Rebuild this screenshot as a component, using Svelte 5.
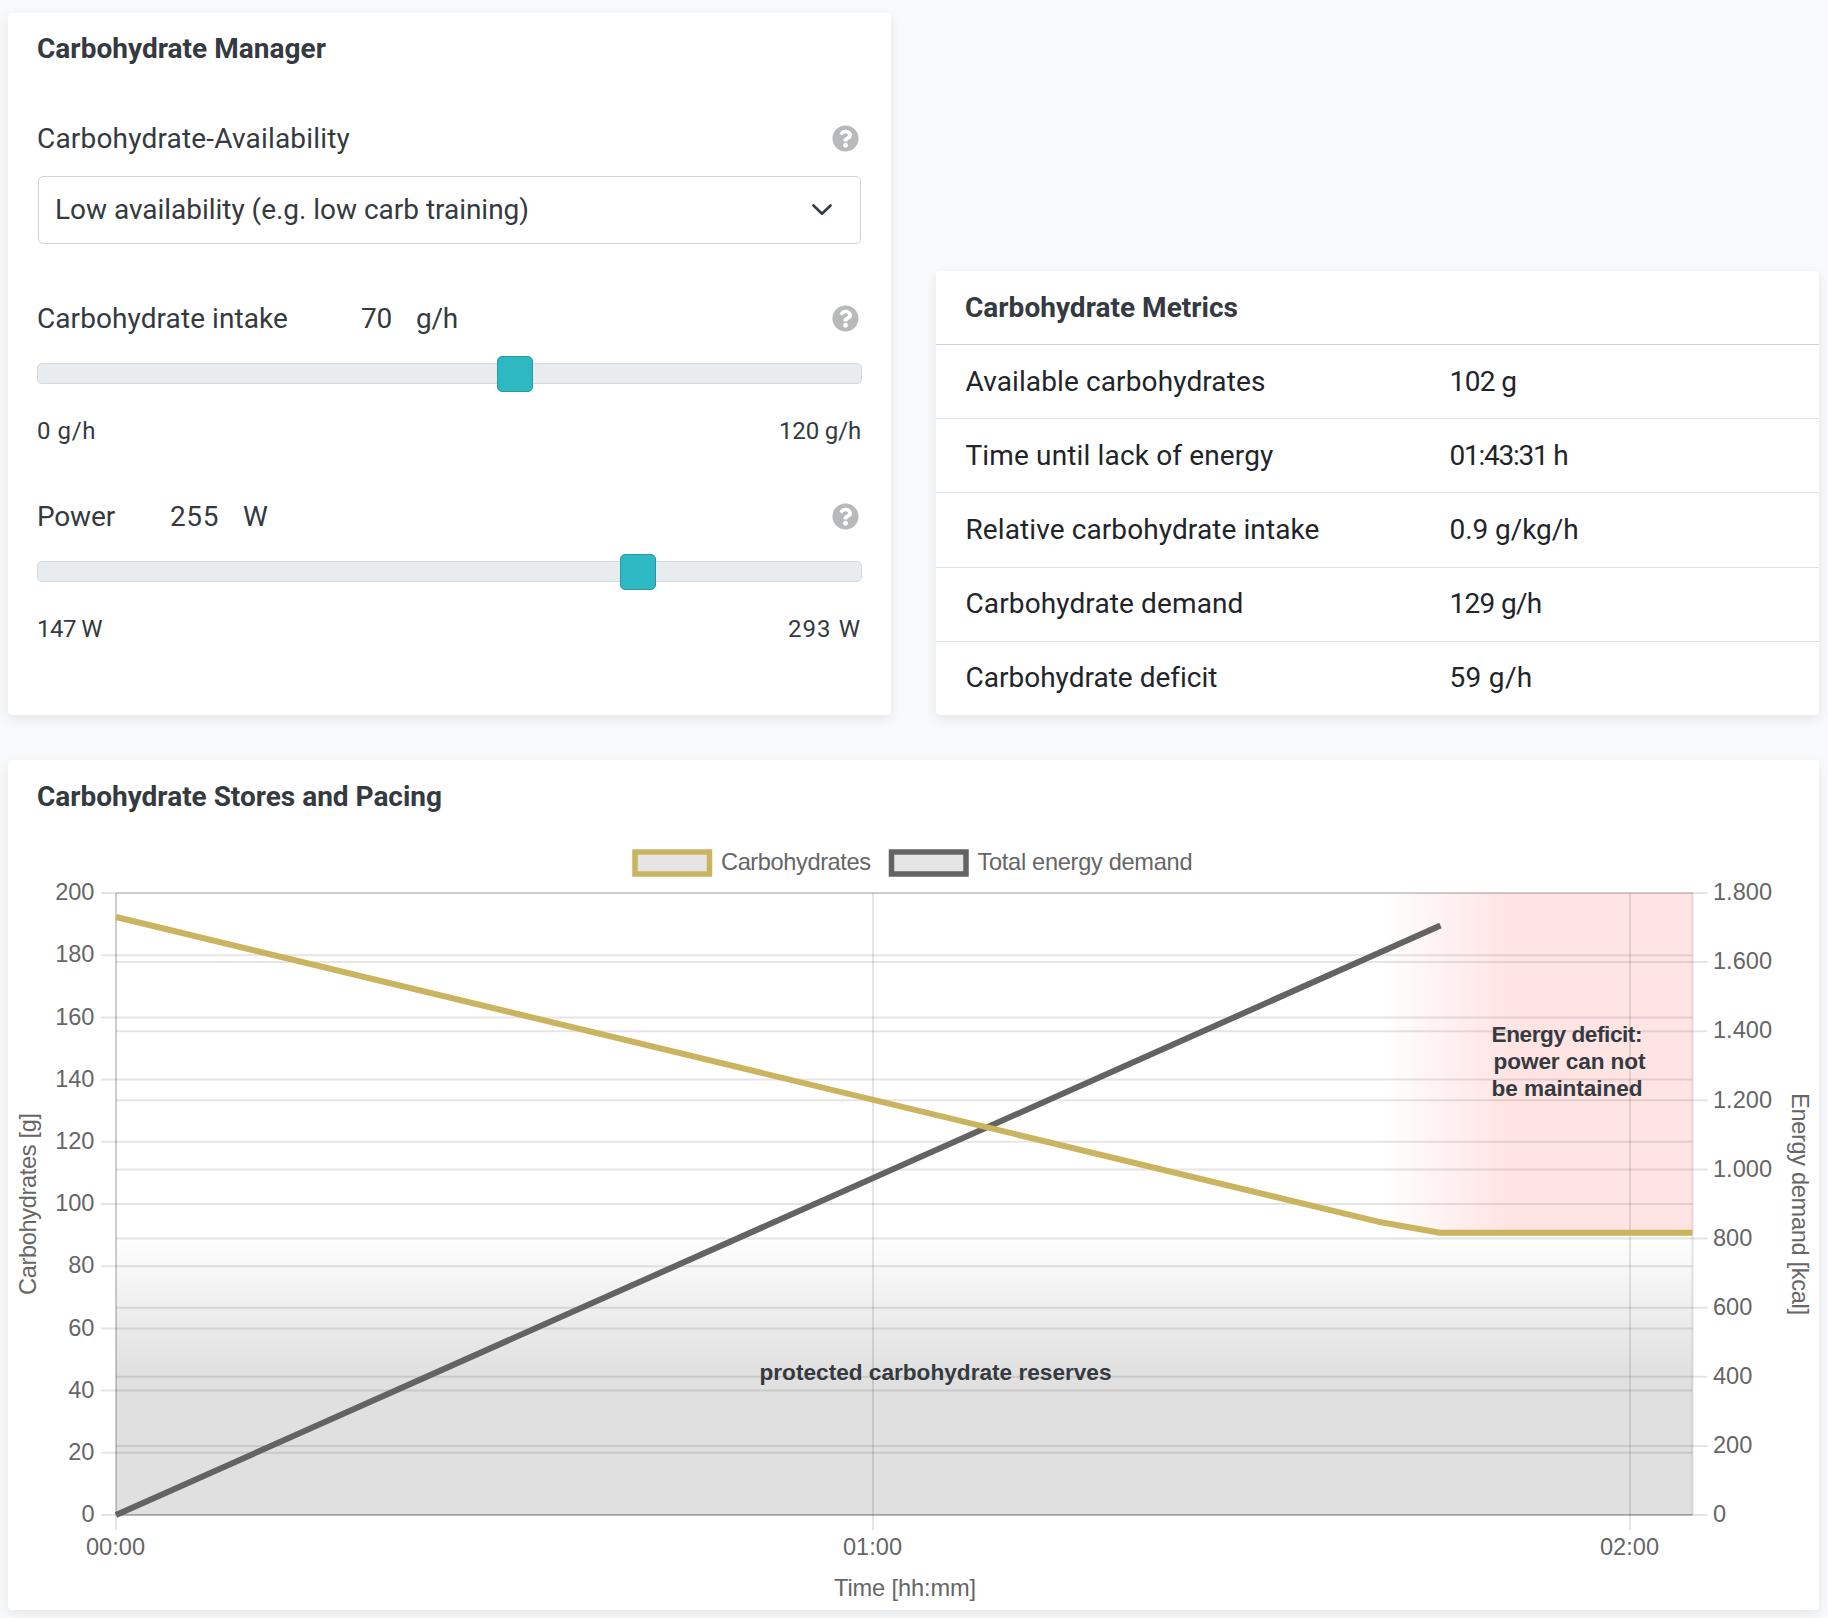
<script>
    const sliders = [
        { name: 'Carbohydrate intake', nameWidth: 251, gap: 72, value: 70, valueWidth: 32, unit: 'g/h', unitWidth: 42, pos: 55.8, min: '0 g/h', minWidth: 59, max: '120 g/h', maxWidth: 82 },
        { name: 'Power', nameWidth: 78, gap: 54, value: 255, valueWidth: 50, unit: 'W', unitWidth: 26, pos: 70.7, min: '147 W', minWidth: 65, max: '293 W', maxWidth: 73 }
    ]
    const metrics = [
        ['Available carbohydrates', 300, '102 g', 67],
        ['Time until lack of energy', 308, '01:43:31 h', 118],
        ['Relative carbohydrate intake', 354, '0.9 g/kg/h', 129],
        ['Carbohydrate demand', 278, '129 g/h', 92],
        ['Carbohydrate deficit', 251, '59 g/h', 83]
    ]

    // plot area inside the chart svg
    const left = 108, right = 1684.5, top = 63, bottom = 685
    const hour = 757
    const x = (h) => left + h * hour
    const yLeft = (v) => bottom - (v / 200) * (bottom - top)
    const yRight = (v) => bottom - (v / 1800) * (bottom - top)

    const leftTicks = Array.from({ length: 11 }, (_, i) => i * 20)
    const rightTicks = Array.from({ length: 10 }, (_, i) => i * 200)
    const hours = ['00:00', '01:00', '02:00']
    const thousands = (v) => v < 1000 ? `${v}` : `${Math.floor(v / 1000)}.${`${v % 1000}`.padStart(3, '0')}`

    const legend = [
        { label: 'Carbohydrates', color: '#cbb45f', x: 627, width: 150 },
        { label: 'Total energy demand', color: '#636362', x: 883.5, width: 215 }
    ]

    // tracks the text so that it fills the given width
    const fit = (node, width) => {
        const letters = node.textContent.length
        if ( letters < 2 ) return
        const natural = node.getBoundingClientRect().width
        node.style.letterSpacing = `${(width - natural) / letters}px`
    }
</script>

{#snippet help()}
    <svg class="help" viewBox="0 0 512 512">
        <path d="M504 256c0 136.997-111.043 248-248 248S8 392.997 8 256C8 119.083 119.043 8 256 8s248 111.083 248 248zM262.655 90c-54.497 0-89.255 22.957-116.549 63.758-3.536 5.286-2.353 12.415 2.715 16.258l34.699 26.31c5.205 3.947 12.621 3.008 16.665-2.122 17.864-22.658 30.113-35.797 57.303-35.797 20.429 0 45.698 13.148 45.698 32.958 0 14.976-12.363 22.667-32.534 33.976C247.128 238.528 216 254.941 216 296v4c0 6.627 5.373 12 12 12h56c6.627 0 12-5.373 12-12v-1.333c0-28.462 83.186-29.647 83.186-106.667 0-58.002-60.165-102-116.531-102zM256 338c-25.365 0-46 20.635-46 46 0 25.364 20.635 46 46 46s46-20.636 46-46c0-25.365-20.635-46-46-46z"/>
    </svg>
{/snippet}

<div class="page">
    <div class="top">
        <section class="card manager">
            <h2><span use:fit={289}>Carbohydrate Manager</span></h2>
            <div class="row first">
                <span use:fit={313}>Carbohydrate-Availability</span>
                {@render help()}
            </div>
            <div class="select">
                <span use:fit={474}>Low availability (e.g. low carb training)</span>
                <svg class="chevron" viewBox="0 0 20 12">
                    <path d="M1.5 1.5 L10 9.7 L18.5 1.5"/>
                </svg>
            </div>
            {#each sliders as s}
                <div class="row">
                    <span use:fit={s.nameWidth}>{s.name}</span>
                    <span class="value" style="margin-left: {s.gap}px" use:fit={s.valueWidth}>{s.value}</span>
                    <span class="unit" use:fit={s.unitWidth}>{s.unit}</span>
                    {@render help()}
                </div>
                <div class="slider">
                    <div class="track"></div>
                    <div class="thumb" style="left: {s.pos}%"></div>
                </div>
                <div class="range">
                    <span use:fit={s.minWidth}>{s.min}</span>
                    <span use:fit={s.maxWidth}>{s.max}</span>
                </div>
            {/each}
        </section>

        <section class="card metrics">
            <h2><span use:fit={273}>Carbohydrate Metrics</span></h2>
            {#each metrics as [name, nameWidth, value, valueWidth]}
                <div class="metric">
                    <div><span use:fit={nameWidth}>{name}</span></div>
                    <div><span use:fit={valueWidth}>{value}</span></div>
                </div>
            {/each}
        </section>
    </div>

    <section class="card stores">
        <h2><span use:fit={405}>Carbohydrate Stores and Pacing</span></h2>
        <svg class="chart" viewBox="0 0 1811 780">
            <defs>
                <linearGradient id="deficit" gradientUnits="userSpaceOnUse" x1="1370" y1="0" x2="1500" y2="0">
                    <stop offset="0" stop-color="#ffe4e4" stop-opacity="0"/>
                    <stop offset="1" stop-color="#ffe4e4"/>
                </linearGradient>
                <linearGradient id="reserve" x1="0" y1="0" x2="0" y2="1">
                    <stop offset="0" stop-color="#e0e0e0" stop-opacity="0"/>
                    <stop offset="0.5" stop-color="#e0e0e0"/>
                </linearGradient>
            </defs>

            {#each legend as l}
                <rect x={l.x} y="22" width="74.5" height="22" fill="#e5e5e5" stroke={l.color} stroke-width="5.5"/>
                <text x={l.x + 86} y="39.5" textLength={l.width}>{l.label}</text>
            {/each}

            <rect x="1360" y={top} width={right - 1360} height="340" fill="url(#deficit)"/>
            <rect x={left} y="403" width={right - left} height={bottom - 403} fill="url(#reserve)"/>

            <g class="grid">
                {#each leftTicks as v}
                    <path d="M{left - 15} {yLeft(v)}H{right}"/>
                {/each}
                {#each rightTicks as v}
                    <path d="M{left} {yRight(v)}H{right + 15}"/>
                {/each}
                {#each hours as h, i}
                    <path d="M{x(i)} {top}V{bottom + 15}"/>
                {/each}
                <path d="M{left} {top}V{bottom}M{right} {top}V{bottom}"/>
                <path d="M{left} {bottom}H{right}"/>
            </g>

            <path class="line" stroke="#636362" d="M{left} {bottom}L1432.5 95.5"/>
            <path class="line" stroke="#cbb45f" d="M{left} 87L1370 391.7L1432 402.7H{right}"/>

            {#each leftTicks as v}
                <text x="86.5" y={yLeft(v) + 7.2} text-anchor="end">{v}</text>
            {/each}
            {#each rightTicks as v}
                <text x="1705" y={yRight(v) + 7.2}>{thousands(v)}</text>
            {/each}
            {#each hours as h, i}
                <text x={x(i) - 0.5} y="725" text-anchor="middle">{h}</text>
            {/each}
            <text x="826" y="766" textLength="142">Time [hh:mm]</text>
            <text transform="translate(27.5 465) rotate(-90)" textLength="182">Carbohydrates [g]</text>
            <text transform="translate(1783.5 263) rotate(90)" textLength="222">Energy demand [kcal]</text>

            <g class="note">
                <text x="1483.5" y="212" textLength="151">Energy deficit:</text>
                <text x="1485.5" y="239" textLength="152">power can not</text>
                <text x="1483.5" y="266" textLength="151">be maintained</text>
                <text x="751.5" y="550" textLength="352">protected carbohydrate reserves</text>
            </g>
        </svg>
    </section>
</div>

<style>
    :global(body) {
        background-color: #f8f9fb;
    }

    .page {
        box-sizing: border-box;
        width: 1828px;
        height: 1618px;
        overflow: hidden;
        padding: 13px 9px 0 8px;
        font-family: Roboto, sans-serif;
        font-size: 28px;
        line-height: 42px;
        color: #343a40;
        white-space: nowrap;
    }

    .top {
        display: flex;
        justify-content: space-between;
        align-items: flex-end;
        height: 702px;
        margin-bottom: 45px;
    }

    .card {
        box-sizing: border-box;
        background-color: white;
        border-radius: 4px;
        box-shadow: 0 4px 12px rgba(0, 0, 0, 0.08);
    }

    h2 {
        margin: 0;
        padding: 0 29px;
        height: 71px;
        line-height: 71px;
        font-size: 28px;
        font-weight: 700;
    }

    .manager {
        width: 883px;
        height: 702px;
    }

    .row {
        box-sizing: border-box;
        display: flex;
        align-items: center;
        height: 42px;
        margin: 47px 32px 0 29px;
        padding-top: 2px;
    }

    .row.first {
        margin-top: 33px;
    }

    .value {
        padding-left: 1px;
    }

    .unit {
        margin-left: 24px;
    }

    .help {
        width: 27px;
        height: 27px;
        margin-left: auto;
        margin-bottom: 2px;
        fill: #b8b9ba;
    }

    .select {
        box-sizing: border-box;
        display: flex;
        justify-content: space-between;
        align-items: center;
        height: 68px;
        margin: 17px 30px 53px;
        padding: 0 28px 0 16px;
        border: 1px solid #ced4da;
        border-radius: 5px;
    }

    .select + .row {
        margin-top: 0;
    }

    .chevron {
        width: 20px;
        height: 12px;
        fill: none;
        stroke: #343a40;
        stroke-width: 2.6;
        stroke-linecap: round;
        stroke-linejoin: round;
    }

    .slider {
        position: relative;
        display: flex;
        align-items: center;
        height: 36px;
        margin: 17px 29px 20px;
    }

    .track {
        box-sizing: border-box;
        flex: 1;
        height: 21px;
        margin-bottom: 1px;
        background-color: #e9ecef;
        border: 1px solid #d3d9df;
        border-radius: 5px;
    }

    .thumb {
        position: absolute;
        box-sizing: border-box;
        top: 0;
        width: 36px;
        height: 36px;
        background-color: #2eb8c2;
        border: 1px solid #2799a2;
        border-radius: 5px;
    }

    .range {
        display: flex;
        justify-content: space-between;
        height: 36px;
        margin: 0 30px 0 29px;
        font-size: 24px;
        line-height: 38px;
    }

    .metrics {
        width: 883px;
        height: 444px;
        color: #212529;
    }

    .metrics h2 {
        height: 73px;
        line-height: 73px;
        color: #343a40;
    }

    .metric {
        box-sizing: border-box;
        display: grid;
        grid-template-columns: 484px 1fr;
        align-items: center;
        height: 74.2px;
        padding: 0 29.5px;
        border-top: 1px solid #dee2e6;
    }

    h2 + .metric {
        border-top-color: #cfd1d4;
    }

    .stores {
        height: 850px;
    }

    .stores h2 {
        height: 70px;
        line-height: 74px;
    }

    .chart {
        display: block;
        width: 1811px;
        height: 780px;
        font-family: "Liberation Sans", Arial, sans-serif;
        font-size: 23.6px;
        fill: #666;
    }

    .grid path {
        fill: none;
        stroke: rgba(0, 0, 0, 0.1);
        stroke-width: 2;
    }

    .line {
        fill: none;
        stroke-width: 6;
        stroke-linejoin: round;
    }

    .note {
        font-size: 22.6px;
        font-weight: 700;
        fill: #343a40;
    }
</style>
